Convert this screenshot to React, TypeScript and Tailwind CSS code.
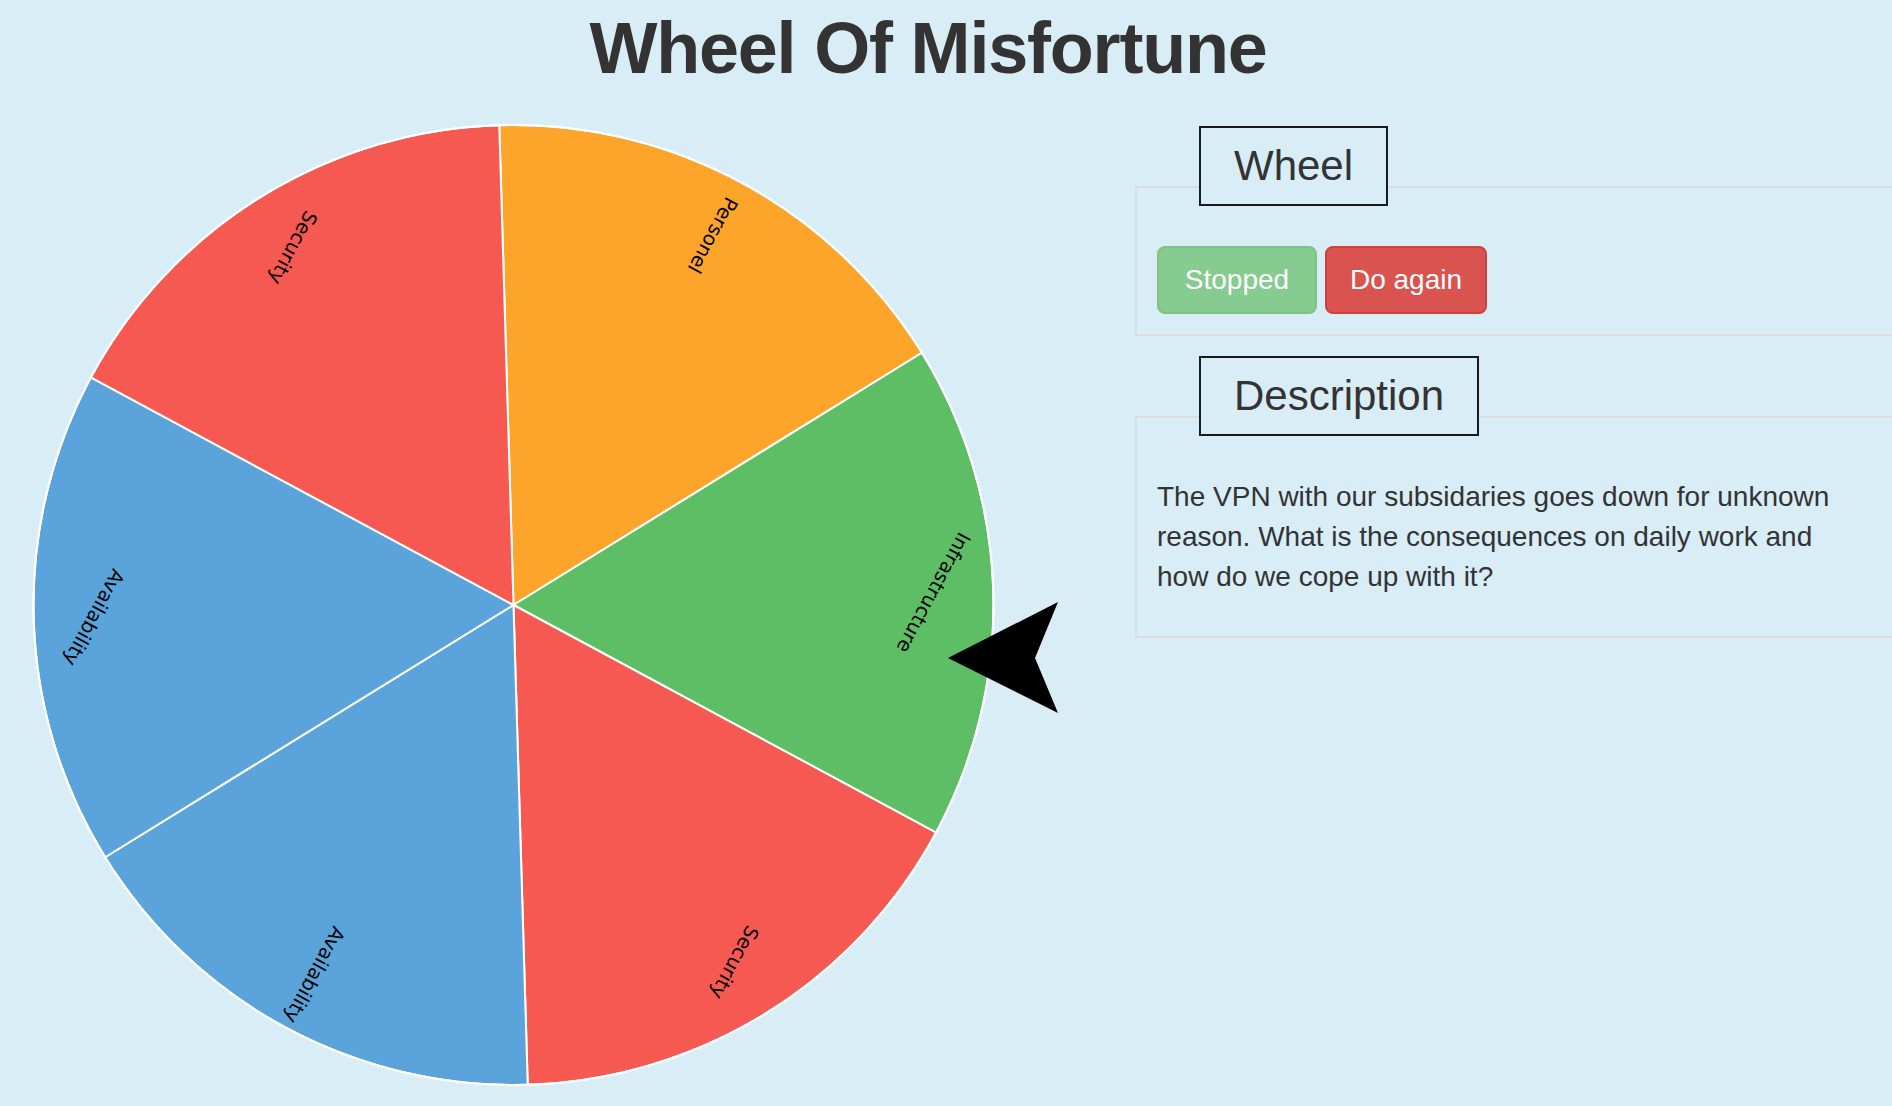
import React from 'react';

const CX = 513.5;
const CY = 605;
const R = 480;
const START = -91.7;

const SEGMENTS = [
  { label: 'Personel', color: '#fda52a' },
  { label: 'Infrastructure', color: '#5dbe65' },
  { label: 'Security', color: '#f55952' },
  { label: 'Availability', color: '#5aa4db' },
  { label: 'Availability', color: '#5aa4db' },
  { label: 'Security', color: '#f55952' },
];

const rad = (deg: number) => (deg * Math.PI) / 180;

function point(deg: number, r: number) {
  return [CX + r * Math.cos(rad(deg)), CY + r * Math.sin(rad(deg))];
}

function Wheel() {
  return (
    <svg width={1135} height={1006} viewBox="0 100 1135 1006" className="block shrink-0">
      {SEGMENTS.map((seg, i) => {
        const a0 = START + i * 60;
        const a1 = a0 + 60;
        const [x0, y0] = point(a0, R);
        const [x1, y1] = point(a1, R);
        const [tx, ty] = point((a0 + a1) / 2, 420);
        return (
          <g key={i}>
            <path
              d={`M ${CX} ${CY} L ${x0} ${y0} A ${R} ${R} 0 0 1 ${x1} ${y1} Z`}
              fill={seg.color}
              stroke="#ffffff"
              strokeWidth={2}
            />
            <text
              x={tx}
              y={ty}
              textAnchor="middle"
              dominantBaseline="central"
              transform={`rotate(118.3 ${tx} ${ty})`}
              fontSize={19.5}
              fill="#000000"
              style={{ fontFamily: '"DejaVu Sans", sans-serif' }}
            >
              {seg.label}
            </text>
          </g>
        );
      })}
      <circle cx={CX} cy={CY} r={R} fill="none" stroke="#ffffff" strokeWidth={2} />
      {/* pointer */}
      <polygon points="948,658 1058,602 1035,658 1058,713" fill="#000000" />
    </svg>
  );
}

function Legend({ children, className = '' }: { children: React.ReactNode; className?: string }) {
  return (
    <div
      className={`relative z-10 ml-[64px] flex h-[80px] w-fit items-center border-2 border-[#1a1a1a] bg-[#d9edf7] px-[33px] text-[42px] leading-none text-[#333333] ${className}`}
    >
      {children}
    </div>
  );
}

export default function App() {
  return (
    <div
      className="h-[1106px] w-[1892px] overflow-hidden bg-[#d9edf7] text-[#333333]"
      style={{ fontFamily: '"Liberation Sans", Arial, sans-serif' }}
    >
      <div className="h-[100px] pr-[36px] pt-[12px] text-center">
        <h1 className="text-[72px] font-bold leading-none tracking-[-1.2px]">Wheel Of Misfortune</h1>
      </div>

      <div className="flex">
        <Wheel />

        <div className="w-[800px] shrink-0 pt-[26px]">
          <Legend>Wheel</Legend>
          <div className="-mt-[20px] border-2 border-[#dddddd] px-[20px] pb-[20px] pt-[58px]">
            <div className="flex gap-[8px]">
              <button
                disabled
                className="flex h-[68px] w-[160px] items-center justify-center rounded-[8px] border-2 border-[#7cc385] bg-[#86cb8f] text-[28px] leading-[40px] text-white"
              >
                Stopped
              </button>
              <button className="flex h-[68px] w-[162px] items-center justify-center rounded-[8px] border-2 border-[#d43f3a] bg-[#d9534f] text-[28px] leading-[40px] text-white">
                Do again
              </button>
            </div>
          </div>

          <Legend className="mt-[20px]">Description</Legend>
          <div className="-mt-[20px] border-2 border-[#dddddd] px-[20px] pb-[39px] pt-[59px]">
            <p className="max-w-[700px] text-[28px] leading-[40px]">
              The VPN with our subsidaries goes down for unknown reason. What is the consequences on
              daily work and how do we cope up with it?
            </p>
          </div>
        </div>
      </div>
    </div>
  );
}
